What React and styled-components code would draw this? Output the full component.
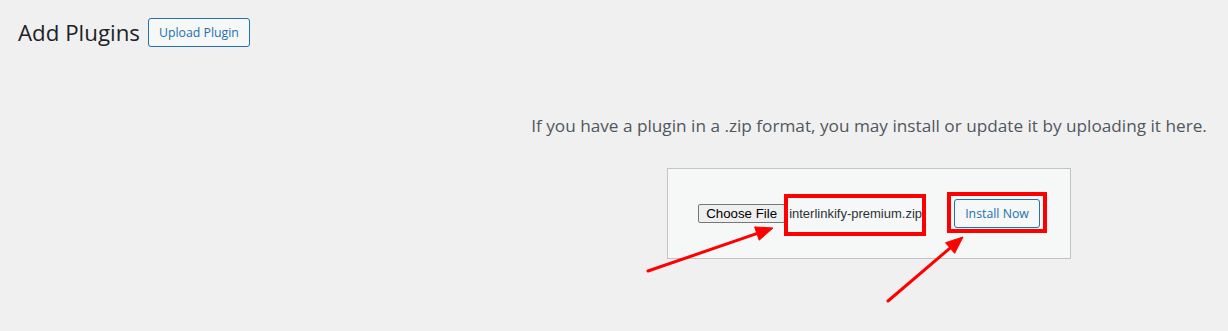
import React from 'react'
import styled, { createGlobalStyle } from 'styled-components'

const GlobalStyle = createGlobalStyle`
	html, body {
		margin: 0;
		padding: 0;
		background: #f0f0f1;
	}
	body {
		font-family: 'Open Sans', 'Noto Sans', sans-serif;
		color: #3c434a;
	}
`

const Page = styled.div`
	position: relative;
	width: 1228px;
	height: 331px;
	overflow: hidden;
	background: #f0f0f1;
`

const Header = styled.div`
	display: flex;
	align-items: center;
	gap: 8px;
	padding: 18px 0 0 18px;
`

const Title = styled.h1`
	margin: 0;
	font-size: 22.3px;
	font-weight: 400;
	line-height: 29px;
	color: #1d2327;
`

const OutlineButton = styled.button`
	display: inline-flex;
	align-items: center;
	justify-content: center;
	height: ${({ $h }) => $h || 29}px;
	padding: 0 ${({ $px }) => $px || 10}px;
	font-family: 'Open Sans', 'Noto Sans', sans-serif;
	font-size: 12.3px;
	color: #2271b1;
	background: #f6f7f7;
	border: 1px solid #2271b1;
	border-radius: 3px;
	cursor: pointer;
`

const Upload = styled.section`
	margin-left: 510px;
	width: 718px;
	padding-top: 66px;
	text-align: center;
`

const Help = styled.p`
	margin: 0;
	font-size: 17.2px;
	line-height: 26px;
	color: #50575e;
	white-space: nowrap;
`

const Form = styled.form`
	display: inline-flex;
	align-items: center;
	margin-top: 29px;
	padding: 30px;
	height: 29px;
	background: #f6f7f7;
	border: 1px solid #c3c4c7;
`

const FileField = styled.label`
	display: flex;
	align-items: center;
	width: 256px;
	font-family: 'Liberation Sans', Arial, sans-serif;
	font-size: 13px;
`

const FileButton = styled.span`
	display: inline-flex;
	align-items: center;
	height: 17px;
	padding: 0 7px;
	color: #000;
	background: #efefef;
	border: 1px solid #767676;
	border-radius: 2px;
	font-size: 13.3px;
`

const FileName = styled.span`
	margin-left: 4px;
	color: #2c3338;
	font-size: 13px;
`

const Marks = styled.svg`
	position: absolute;
	top: 0;
	left: 0;
	pointer-events: none;
`

const arrowHead = (x1, y1, x2, y2, len = 17, half = 7) => {
	const dx = x2 - x1
	const dy = y2 - y1
	const d = Math.hypot(dx, dy)
	const ux = dx / d
	const uy = dy / d
	const bx = x2 - ux * len
	const by = y2 - uy * len
	return `${x2},${y2} ${bx - uy * half},${by + ux * half} ${bx + uy * half},${by - ux * half}`
}

const arrows = [
	[648, 271, 773, 228],
	[888, 301, 963, 237],
]

const App = () => (
	<Page>
		<GlobalStyle />
		<Header>
			<Title>Add Plugins</Title>
			<OutlineButton $px={10}>Upload Plugin</OutlineButton>
		</Header>
		<Upload>
			<Help>If you have a plugin in a .zip format, you may install or update it by uploading it here.</Help>
			<Form onSubmit={(e) => e.preventDefault()}>
				<FileField>
					<FileButton>Choose File</FileButton>
					<FileName>interlinkify-premium.zip</FileName>
				</FileField>
				<OutlineButton $px={10}>Install Now</OutlineButton>
			</Form>
		</Upload>
		<Marks width='1228' height='331' viewBox='0 0 1228 331'>
			<g fill='none' stroke='#ff0000' strokeWidth='4'>
				<rect x='786' y='196' width='138' height='38' />
				<rect x='949' y='194' width='96' height='37' />
			</g>
			{arrows.map(([x1, y1, x2, y2]) => {
				const d = Math.hypot(x2 - x1, y2 - y1)
				const ex = x2 - ((x2 - x1) / d) * 12
				const ey = y2 - ((y2 - y1) / d) * 12
				return (
					<g key={x1} fill='#ff0000' stroke='#ff0000'>
						<line x1={x1} y1={y1} x2={ex} y2={ey} strokeWidth='3' strokeLinecap='round' />
						<polygon points={arrowHead(x1, y1, x2, y2)} strokeWidth='1' />
					</g>
				)
			})}
		</Marks>
	</Page>
)

export default App
